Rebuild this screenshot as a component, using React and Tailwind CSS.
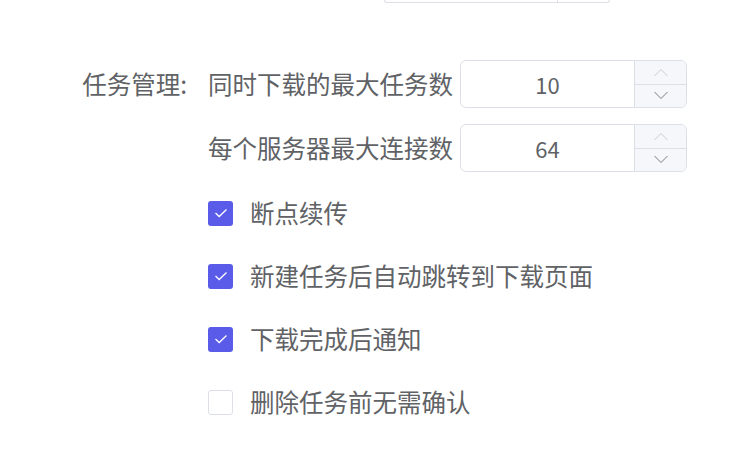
import { useState } from 'react';

const FONT = { fontFamily: '"Noto Sans CJK SC", "Noto Sans", sans-serif' };

export default function App() {
  const [opts, setOpts] = useState([
    { label: '断点续传', checked: true },
    { label: '新建任务后自动跳转到下载页面', checked: true },
    { label: '下载完成后通知', checked: true },
    { label: '删除任务前无需确认', checked: false },
  ]);

  const toggle = (i) =>
    setOpts((o) => o.map((x, j) => (j === i ? { ...x, checked: !x.checked } : x)));

  return (
    <div className="w-[749px] h-[473px] bg-white overflow-hidden text-[#606266]" style={FONT}>
      {/* previous row's input, cut off at the top */}
      <div className="flex">
        <div className="ml-[384px] w-[226px] h-[3px] flex border border-t-0 border-[#dcdfe6] rounded-b-[5px]">
          <div className="flex-1" />
          <div className="w-[52px] border-l border-[#dcdfe6]" />
        </div>
      </div>

      <div className="flex mt-[57px]">
        <div className="w-[187px] text-right text-[24.5px] leading-[48px]">任务管理:</div>
        <div className="ml-[21px] flex flex-col">
          <div className="flex items-center gap-[7px] h-[48px]">
            <span className="text-[24.5px] leading-none">同时下载的最大任务数</span>
            <NumberInput value={10} />
          </div>
          <div className="flex items-center gap-[7px] h-[48px] mt-[16px]">
            <span className="text-[24.5px] leading-none">每个服务器最大连接数</span>
            <NumberInput value={64} />
          </div>

          <div className="flex flex-col mt-[21px] gap-[23px]">
            {opts.map((o, i) => (
              <label key={i} className="flex items-center h-[40px] cursor-pointer" onClick={() => toggle(i)}>
                <Checkbox checked={o.checked} />
                <span className="ml-[17px] text-[24.5px] leading-none">{o.label}</span>
              </label>
            ))}
          </div>
        </div>
      </div>
    </div>
  );
}

function NumberInput({ value }) {
  return (
    <div className="flex w-[227px] h-[48px] border border-[#dcdfe6] rounded-[6px] overflow-hidden">
      <div className="flex-1 flex items-center justify-center text-[22px] text-[#606266]">{value}</div>
      <div className="w-[52px] flex flex-col bg-[#f5f7fa] border-l border-[#dcdfe6]">
        <div className="flex-1 flex items-center justify-center border-b border-[#dcdfe6]">
          <svg width="16" height="9" viewBox="0 0 16 9" fill="none">
            <path d="M1.5 8 L8 1.5 L14.5 8" stroke="#c8cbd1" strokeWidth="1" />
          </svg>
        </div>
        <div className="flex-1 flex items-center justify-center">
          <svg width="16" height="9" viewBox="0 0 16 9" fill="none">
            <path d="M1.5 1 L8 7.5 L14.5 1" stroke="#7a7c82" strokeWidth="1" />
          </svg>
        </div>
      </div>
    </div>
  );
}

function Checkbox({ checked }) {
  if (!checked) {
    return <span className="w-[25px] h-[25px] rounded-[3px] border border-[#dcdfe6] bg-white shrink-0" />;
  }
  return (
    <span className="w-[25px] h-[25px] rounded-[3px] bg-[#5b5bea] flex items-center justify-center shrink-0">
      <svg width="14" height="10" viewBox="0 0 14 10" fill="none">
        <path d="M1.5 5 L5.2 8.5 L12.5 1.5" stroke="white" strokeWidth="1.3" />
      </svg>
    </span>
  );
}
